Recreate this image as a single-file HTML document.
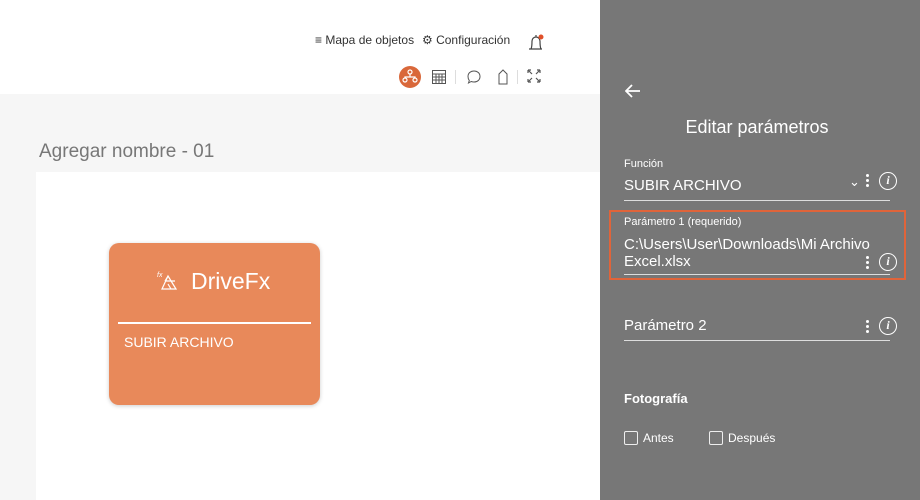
<!DOCTYPE html>
<html><head><meta charset="utf-8"><style>
*{margin:0;padding:0;box-sizing:border-box}
body{width:920px;height:500px;overflow:hidden;position:relative;font-family:"Liberation Sans",sans-serif;background:#fff}
.abs{position:absolute}
.gray{left:0;top:94px;width:600px;height:406px;background:#f6f6f6}
.card{left:36px;top:172px;width:564px;height:328px;background:#fff}
.tile{left:109px;top:243px;width:211px;height:162px;background:#e8895a;border-radius:10px;box-shadow:0 1px 4px rgba(0,0,0,.2)}
.panel{left:600px;top:0;width:320px;height:500px;background:#777}
.w{color:#fff}
.line{height:1px;background:#ddd}
.info{width:18px;height:18px;border:1.5px solid #fff;border-radius:50%;color:#fff;font:italic bold 12px "Liberation Serif",serif;text-align:center;line-height:15px}
.dots{width:3px}
.dots i{display:block;width:3px;height:3px;background:#fff;border-radius:50%;margin-bottom:2px}
.cb{width:14px;height:14px;border:1px solid #eee;border-radius:2px}
</style></head><body>
<div class="abs" style="left:315px;top:33px;font-size:12px;color:#333">&#8801; Mapa de objetos</div>
<div class="abs" style="left:422px;top:33px;font-size:12px;color:#333">&#9881; Configuración</div>
<svg class="abs" style="left:526px;top:32px" width="20" height="20" viewBox="0 0 20 20"><path d="M3 17h13M5 17c1-2 1-5 1-8a4 4 0 0 1 8 0c0 3 0 6 1 8M10 3v2" stroke="#444" fill="none" stroke-width="1.2"/><circle cx="15" cy="5" r="2.5" fill="#e0502a"/></svg>
<div class="abs" style="left:399px;top:66px;width:22px;height:22px;border-radius:50%;background:#d9683a"></div>
<svg class="abs" style="left:402px;top:68px" width="16" height="16" viewBox="0 0 16 16" fill="none" stroke="#fff" stroke-width="1.2"><circle cx="8" cy="4" r="2"/><circle cx="3" cy="12" r="2"/><circle cx="13" cy="12" r="2"/><path d="M8 6v3M3 10V9h10v1"/></svg>
<svg class="abs" style="left:431px;top:69px" width="16" height="16" viewBox="0 0 16 16" fill="none" stroke="#555" stroke-width="1"><rect x="1.5" y="1.5" width="13" height="13"/><path d="M1.5 5h13M1.5 8h13M1.5 11h13M5 5v9.5M8 5v9.5M11 5v9.5"/></svg>
<div class="abs" style="left:455px;top:70px;width:1px;height:14px;background:#ddd"></div>
<svg class="abs" style="left:466px;top:69px" width="16" height="16" viewBox="0 0 16 16" fill="none" stroke="#555" stroke-width="1"><path d="M8 2c3.5 0 6 2.3 6 5.5S11.5 13 8 13c-1 0-2-.2-2.8-.5L2.5 14l.8-2.5C2.5 10.5 2 9 2 7.5 2 4.3 4.5 2 8 2z"/></svg>
<svg class="abs" style="left:495px;top:68px" width="16" height="18" viewBox="0 0 16 18" fill="none" stroke="#555" stroke-width="1"><path d="M4 16V6l4-4 4 4v10z"/></svg>
<div class="abs" style="left:517px;top:70px;width:1px;height:14px;background:#ddd"></div>
<svg class="abs" style="left:527px;top:69px" width="14" height="14" viewBox="0 0 14 14" fill="none" stroke="#555" stroke-width="1.2"><path d="M1 1l4 4M1 1h3M1 1v3M13 1l-4 4M13 1h-3M13 1v3M1 13l4-4M1 13h3M1 13v-3M13 13l-4-4M13 13h-3M13 13v-3"/></svg>
<div class="abs gray"></div>
<div class="abs" style="left:39px;top:141px;font-size:19px;color:#777">Agregar nombre - 01</div>
<div class="abs card"></div>
<div class="abs tile">
 <svg class="abs" style="left:48px;top:27px" width="24" height="22" viewBox="0 0 24 22" fill="none" stroke="#fff" stroke-width="1.2"><text x="0" y="7" font-size="7" fill="#fff" stroke="none" font-style="italic">fx</text><path d="M11 6l8 13H5zM11 6l-3 5M8 11h10M14 19l-3-5"/></svg>
 <div class="abs w" style="left:82px;top:25px;font-size:23px">DriveFx</div>
 <div class="abs" style="left:9px;top:79px;width:193px;height:1.5px;background:#fff"></div>
 <div class="abs w" style="left:15px;top:91px;font-size:14px">SUBIR ARCHIVO</div>
</div>
<div class="abs panel">
 <svg class="abs" style="left:25px;top:84px" width="16" height="14" viewBox="0 0 16 14" fill="none" stroke="#fff" stroke-width="1.8"><path d="M15 7H2M7 1L1 7l6 6"/></svg>
 <div class="abs w" style="left:0;width:314px;text-align:center;top:117px;font-size:18px">Editar parámetros</div>
 <div class="abs w" style="left:24px;top:158px;font-size:11px">Función</div>
 <div class="abs w" style="left:24px;top:177px;font-size:15px">SUBIR ARCHIVO</div>
 <div class="abs w" style="left:249px;top:174px;font-size:13px">&#8964;</div>
 <div class="abs dots" style="left:266px;top:174px"><i></i><i></i><i></i></div>
 <div class="abs info" style="left:279px;top:172px">i</div>
 <div class="abs line" style="left:24px;top:200px;width:266px"></div>
 <div class="abs" style="left:9px;top:210px;width:297px;height:70px;border:2px solid #e0643a"></div>
 <div class="abs w" style="left:24px;top:216px;font-size:11px">Parámetro 1 (requerido)</div>
 <div class="abs w" style="left:24px;top:236px;font-size:15px;line-height:17px">C:\Users\User\Downloads\Mi Archivo<br>Excel.xlsx</div>
 <div class="abs dots" style="left:266px;top:256px"><i></i><i></i><i></i></div>
 <div class="abs info" style="left:279px;top:253px">i</div>
 <div class="abs line" style="left:24px;top:274px;width:266px"></div>
 <div class="abs w" style="left:24px;top:317px;font-size:15px">Parámetro 2</div>
 <div class="abs dots" style="left:266px;top:320px"><i></i><i></i><i></i></div>
 <div class="abs info" style="left:279px;top:317px">i</div>
 <div class="abs line" style="left:24px;top:340px;width:266px"></div>
 <div class="abs w" style="left:24px;top:391px;font-size:13px;font-weight:bold">Fotografía</div>
 <div class="abs cb" style="left:24px;top:431px"></div>
 <div class="abs w" style="left:43px;top:431px;font-size:12px">Antes</div>
 <div class="abs cb" style="left:109px;top:431px"></div>
 <div class="abs w" style="left:128px;top:431px;font-size:12px">Después</div>
</div>
</body></html>
